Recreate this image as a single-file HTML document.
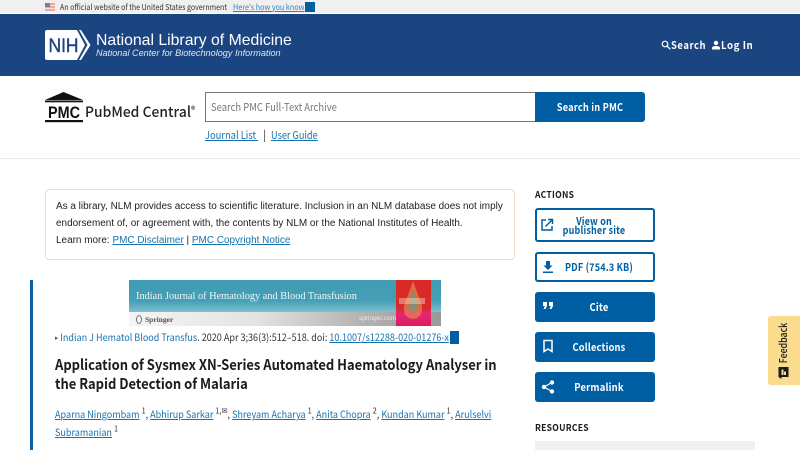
<!DOCTYPE html>
<html lang="en"><head><meta charset="utf-8"><title>PMC</title>
<style>
html,body{margin:0;padding:0;background:#fff;}
body{width:800px;height:450px;overflow:hidden;position:relative;font-family:"Noto Sans CJK SC","Liberation Sans",sans-serif;color:#1b1b1b;}
.t{position:absolute;white-space:nowrap;line-height:1;transform-origin:left center;}
.box{position:absolute;box-sizing:border-box;}
a{color:#0a5e9e;text-decoration:underline;}
.lib{font-family:"Liberation Sans",sans-serif;}
.btn{position:absolute;left:535px;width:120px;box-sizing:border-box;border-radius:3px;background:#005ea2;}
.out{background:#fff;border:2px solid #005ea2;}
.btn svg{position:absolute;}
.lab{position:absolute;width:120px;text-align:center;white-space:nowrap;font-size:10.5px;line-height:14px;font-weight:700;letter-spacing:.2px;color:#fff;}
sup{font-size:8px;line-height:0;}
</style></head><body>
<div class="box" style="left:0;top:0;width:800px;height:13px;background:#f0f0f0"></div>
<svg class="box" style="left:45px;top:3px" width="10" height="8" viewBox="0 0 10 8"><rect width="10" height="8" fill="#f2a89c"/><rect y="2" width="10" height="1" fill="#f7e0dc"/><rect y="5" width="10" height="1" fill="#f7e0dc"/><rect width="5" height="4" fill="#6f7fb0"/></svg>
<div class="t" style="left:60px;top:1.5px;font-size:8px;line-height:11px;color:#333;transform:scaleX(.88)">An official website of the United States government</div>
<div class="t" style="left:233px;top:1.5px;font-size:8px;line-height:11px;transform:scaleX(.9)"><a href="#" style="color:#2a83bf">Here's how you know</a></div>
<div class="box" style="left:305px;top:2px;width:10px;height:10px;background:#005ea2"></div>

<div class="box" style="left:0;top:13px;width:800px;height:63px;background:#1b4581;border-top:1px solid #fff;border-bottom:0"></div>
<svg class="box" style="left:45px;top:30px" width="47" height="30" viewBox="0 0 47 30"><path d="M2 0H32L40 15L32 30H2Q0 30 0 28V2Q0 0 2 0Z" fill="#fff"/><path d="M34 0H36L45.500 15L36 30H34L42.500 15Z" fill="#fff"/><text x="3.500" y="22" font-family="Liberation Sans" font-size="19" fill="#1b4581" stroke="#1b4581" stroke-width=".4" textLength="30" lengthAdjust="spacingAndGlyphs">NIH</text></svg>
<div class="t lib" style="left:96px;top:31px;font-size:15.800px;line-height:19px;color:#fff">National Library of Medicine</div>
<div class="t lib" style="left:96px;top:47px;font-size:9.130px;line-height:12px;color:#dfe6f0;font-style:italic">National Center for Biotechnology Information</div>
<svg class="box" style="left:661px;top:40px" width="10" height="10" viewBox="0 0 10 10"><circle cx="4" cy="4" r="2.800" fill="none" stroke="#fff" stroke-width="1.200"/><path d="M6 6L9.300 9.300" stroke="#fff" stroke-width="1.300"/></svg>
<div class="t" style="left:671px;top:38px;font-size:10.500px;line-height:16px;color:#fff;font-weight:700;letter-spacing:.6px;transform:scaleX(.9)">Search</div>
<svg class="box" style="left:711px;top:40px" width="10" height="10" viewBox="0 0 10 10"><circle cx="5" cy="3" r="2.200" fill="#fff"/><path d="M1 9.500V8Q1 6 5 6T9 8V9.500Z" fill="#fff"/></svg>
<div class="t" style="left:721px;top:38px;font-size:10.500px;line-height:16px;color:#fff;font-weight:700;letter-spacing:.6px;transform:scaleX(.925)">Log In</div>

<svg class="box" style="left:45px;top:92px" width="40" height="31" viewBox="0 0 40 31"><path d="M18.500 0L38 8H0Z" fill="#111"/><rect x="0" y="8.500" width="38" height="1.800" fill="#111"/><rect x="0" y="28" width="38" height="2.200" fill="#111"/><text x="3" y="26" font-family="Liberation Sans" font-weight="700" font-size="17" fill="#111" textLength="32" lengthAdjust="spacingAndGlyphs">PMC</text></svg>
<div class="t" style="left:85px;top:103px;font-size:14.300px;line-height:18px;color:#222;font-weight:500;letter-spacing:.05px;transform:scaleX(.965)">PubMed Central<sup style="font-size:9px;line-height:0;vertical-align:4px">®</sup></div>
<div class="box" style="left:205px;top:92px;width:331px;height:30px;border:1px solid #777;background:#fff"></div>
<div class="t" style="left:211px;top:99px;font-size:11px;line-height:16px;color:#777;transform:scaleX(.859)">Search PMC Full-Text Archive</div>
<div class="box" style="left:535px;top:92px;width:110px;height:30px;background:#005ea2;border-radius:0 3px 3px 0"></div>
<div class="lab" style="left:530px;top:101px;transform:scaleX(.88)">Search in PMC</div>
<div class="t" style="left:205px;top:127px;font-size:11px;line-height:16px;transform:scaleX(.85)"><a href="#" style="color:#1672ae">Journal List&nbsp;</a></div>
<div class="t" style="left:263px;top:127px;font-size:11px;line-height:16px;color:#333">|</div>
<div class="t" style="left:271px;top:127px;font-size:11px;line-height:16px;transform:scaleX(.833)"><a href="#" style="color:#1672ae">User Guide</a></div>
<div class="box" style="left:0;top:158px;width:800px;height:1px;background:#e8e8e8"></div>

<div class="box" style="left:45px;top:189px;width:470px;height:71px;border:1px solid #f5d9d0;border-radius:4px"></div>
<div class="t lib" style="left:56px;top:198px;font-size:9.960px;line-height:17px;color:#222">As a library, NLM provides access to scientific literature. Inclusion in an NLM database does not imply<br>endorsement of, or agreement with, the contents by NLM or the National Institutes of Health.<br>Learn more: <a href="#" style="color:#1672ae">PMC Disclaimer</a> | <a href="#" style="color:#1672ae">PMC Copyright Notice</a></div>

<div class="box" style="left:30px;top:280px;width:3px;height:170px;background:#0b62a8"></div>
<div class="box" style="left:129px;top:280px;width:312px;height:46px;background:linear-gradient(180deg,#3f9cb3 0,#459fb6 45%,#7fc0ce 70%);overflow:hidden">
  <div class="box" style="left:0;top:32px;width:312px;height:14px;background:linear-gradient(90deg,#f4f4f4 0,#e4e4e4 40%,#b2b2b2 75%,#999 100%)"></div>
  <div class="box" style="left:267px;top:0;width:35px;height:46px;background:linear-gradient(180deg,#d92a2a 0,#d92a2a 60%,#e8247a 75%,#d91e5a 100%)"></div>
  <svg class="box" style="left:267px;top:0" width="35" height="46" viewBox="0 0 35 46"><path d="M17 1L26 26Q27 38 17 39Q7 38 8 26Z" fill="#e8a04a" opacity=".55"/><path d="M17 8L22 26Q22 31 17 31Q12 31 12 26Z" fill="#4aa3a0" opacity=".55"/><rect x="3" y="18" width="26" height="6" fill="#f3d9c0" opacity=".45"/></svg>
  <div class="t" style="left:7px;top:10px;font-family:'Liberation Serif',serif;font-size:10.330px;line-height:13px;color:#eef6f8">Indian Journal of Hematology and Blood Transfusion</div>
  <div class="t" style="left:16px;top:35px;font-family:'Liberation Serif',serif;font-weight:700;font-size:7.500px;line-height:9px;color:#555">Springer</div>
  <div class="box" style="left:7px;top:35px;width:6px;height:9px;border:1px solid #777;border-radius:50%"></div>
  <div class="t lib" style="left:230px;top:35px;font-size:6.500px;line-height:8px;color:#e8e8e8">springer.com</div>
</div>
<div class="t" style="left:55px;top:328.500px;font-size:10px;line-height:15px;color:#333;transform:scaleX(.905)"><span style="color:#0a6bb0;font-size:7px;vertical-align:1px">▸</span> <a href="#" style="color:#1672ae;text-decoration:none">Indian J Hematol Blood Transfus</a>. 2020 Apr 3;36(3):512–518. doi: <a href="#" style="color:#1672ae">10.1007/s12288-020-01276-x</a></div>
<div class="box" style="left:450px;top:331px;width:9px;height:13px;background:#005ea2"></div>

<div class="t" style="left:55px;top:355px;font-size:14.500px;line-height:20px;color:#1b1b1b;font-weight:700;transform:scaleX(.895)">Application of Sysmex XN-Series Automated Haematology Analyser in</div>
<div class="t" style="left:55px;top:374px;font-size:14.500px;line-height:20px;color:#1b1b1b;font-weight:700;transform:scaleX(.895)">the Rapid Detection of Malaria</div>
<div class="t" style="left:55px;top:405px;font-size:10px;line-height:18px;color:#333;transform:scaleX(.905)"><a href="#" style="color:#1672ae">Aparna Ningombam</a> <sup>1</sup>, <a href="#" style="color:#1672ae">Abhirup Sarkar</a> <sup>1,✉</sup>, <a href="#" style="color:#1672ae">Shreyam Acharya</a> <sup>1</sup>, <a href="#" style="color:#1672ae">Anita Chopra</a> <sup>2</sup>, <a href="#" style="color:#1672ae">Kundan Kumar</a> <sup>1</sup>, <a href="#" style="color:#1672ae">Arulselvi</a></div>
<div class="t" style="left:55px;top:423px;font-size:10px;line-height:18px;color:#333;transform:scaleX(.905)"><a href="#" style="color:#1672ae">Subramanian</a> <sup>1</sup></div>

<div class="t" style="left:535px;top:187px;font-size:9.500px;line-height:14px;color:#1b1b1b;font-weight:700;letter-spacing:.3px;transform:scaleX(.9)">ACTIONS</div>
<div class="btn out" style="top:208px;height:34px">
<svg style="left:3px;top:8px" width="14" height="14" viewBox="0 0 14 14"><path d="M6 2H2V12H12V8" fill="none" stroke="#005ea2" stroke-width="1.500"/><path d="M5.500 8.500L12 2M8 1.500H12.500V6" fill="none" stroke="#005ea2" stroke-width="1.500"/></svg></div>
<div class="lab" style="left:534px;top:215px;color:#005ea2;transform:scaleX(.856)">View on</div>
<div class="lab" style="left:534px;top:224px;color:#005ea2;transform:scaleX(.856)">publisher site</div>
<div class="btn out" style="top:252px;height:30px">
<svg style="left:4px;top:6px" width="14" height="14" viewBox="0 0 14 14"><path d="M5 1H9V5.500H11.500L7 10L2.500 5.500H5Z" fill="#005ea2"/><rect x="2" y="11.500" width="10" height="1.500" fill="#005ea2"/></svg></div>
<div class="lab" style="left:539px;top:261px;color:#005ea2;transform:scaleX(.865)">PDF (754.3 KB)</div>
<div class="btn" style="top:292px;height:30px">
<svg style="left:7px;top:9px" width="12" height="10" viewBox="0 0 12 10"><path d="M1 1H5V5L3.500 8H1.500L2.800 5H1ZM7 1H11V5L9.500 8H7.500L8.800 5H7Z" fill="#fff"/></svg></div>
<div class="lab" style="left:539px;top:301px;transform:scaleX(.9)">Cite</div>
<div class="btn" style="top:332px;height:30px">
<svg style="left:7px;top:7px" width="12" height="14" viewBox="0 0 12 14"><path d="M2 1.500H10V12.500L6 10L2 12.500Z" fill="none" stroke="#fff" stroke-width="1.500"/></svg></div>
<div class="lab" style="left:539px;top:341px;transform:scaleX(.883)">Collections</div>
<div class="btn" style="top:372px;height:30px">
<svg style="left:6px;top:8px" width="14" height="14" viewBox="0 0 14 14"><path d="M11 2.500L3 7L11 11.500" fill="none" stroke="#fff" stroke-width="1.200"/><circle cx="11" cy="2.500" r="2.200" fill="#fff"/><circle cx="3" cy="7" r="2.200" fill="#fff"/><circle cx="11" cy="11.500" r="2.200" fill="#fff"/></svg></div>
<div class="lab" style="left:539px;top:381px;transform:scaleX(.9)">Permalink</div>
<div class="t" style="left:535px;top:420px;font-size:9.500px;line-height:14px;color:#1b1b1b;font-weight:700;letter-spacing:.3px;transform:scaleX(.9)">RESOURCES</div>
<div class="box" style="left:535px;top:441px;width:220px;height:9px;background:#f0f0f0"></div>

<div class="box" style="left:768px;top:316px;width:32px;height:69px;background:#fbdc8f;border-radius:3px 0 0 3px"></div>
<div class="t" style="left:741px;top:336px;width:86px;text-align:center;font-size:10.500px;line-height:14px;color:#1b1b1b;font-weight:500;transform-origin:center;transform:rotate(-90deg) scaleX(.84)">Feedback</div>
<svg class="box" style="left:778px;top:367px" width="12" height="12" viewBox="0 0 11 12"><path d="M0 0H10V10H3V12L0 10Z" fill="#1b1b1b"/><path d="M3 2.500H5V8H3ZM5.500 4.500H7.500V8H5.500Z" fill="#fbdc8f"/></svg>
</body></html>
